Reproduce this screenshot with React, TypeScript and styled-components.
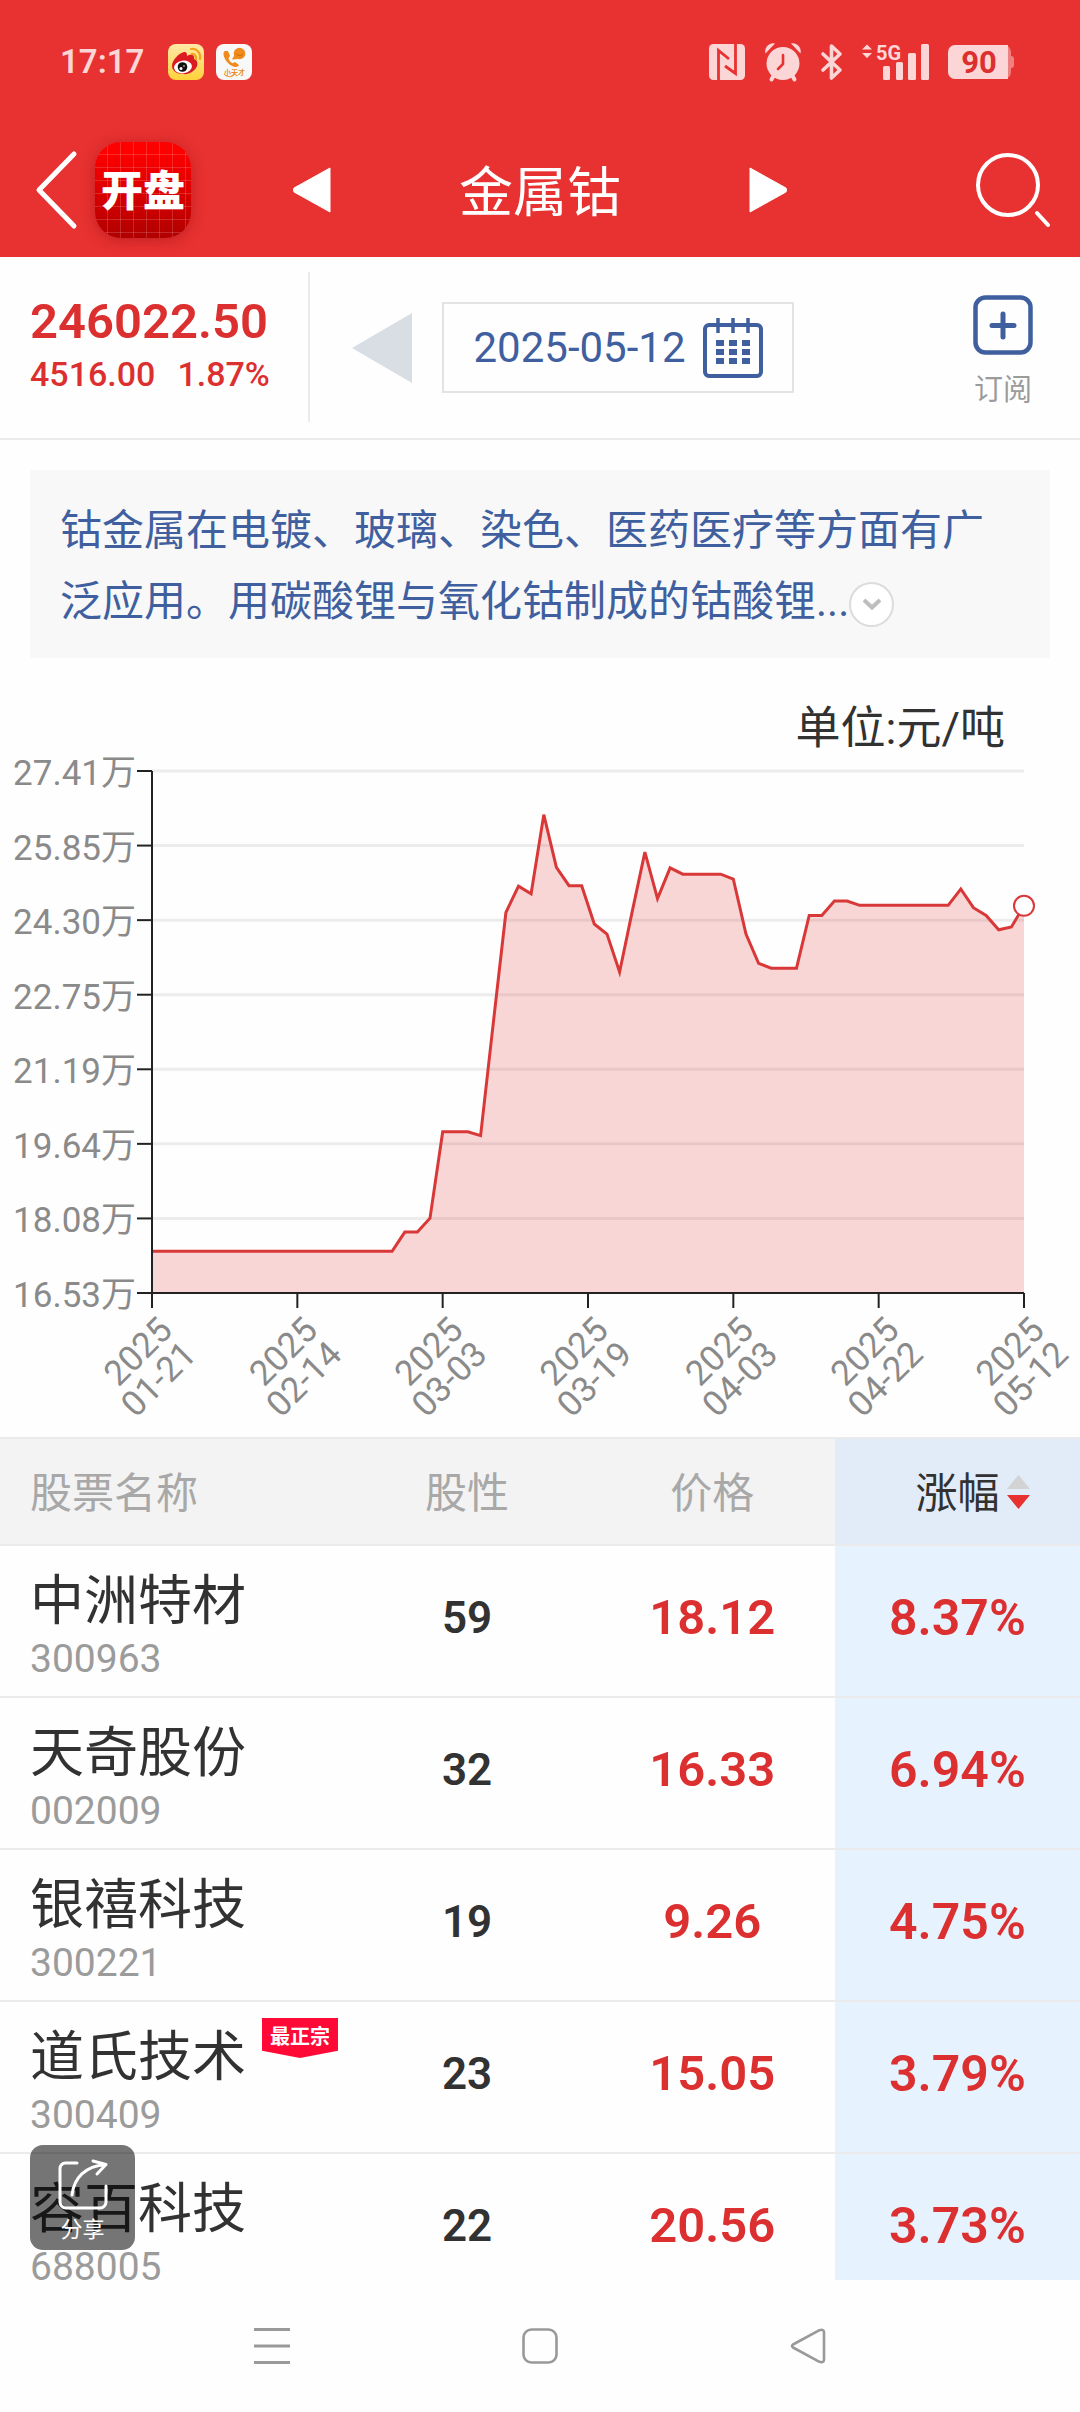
import React, { useState } from "react";
import styled, { createGlobalStyle } from "styled-components";

const color = {
  red: "#e83131",
  up: "#dc2f2f",
  blue: "#3f5f9f",
  ink: "#323232",
  muted: "#9b9b9b",
  head: "#a8a8a8",
  line: "#ebebeb",
  pale: "#fcd6d6",
};

const GlobalStyle = createGlobalStyle`
  * { box-sizing: border-box; }
  body {
    margin: 0;
    background: #fefefe;
    color: ${color.ink};
    font-family: Roboto, "Noto Sans CJK SC", sans-serif;
  }
  button {
    margin: 0;
    padding: 0;
    border: 0;
    background: none;
    color: inherit;
    font: inherit;
    cursor: pointer;
  }
  svg { display: block; overflow: visible; }
`;

const Screen = styled.div`
  display: flex;
  flex-direction: column;
  height: 100vh;
  overflow: hidden;
`;

/* ---------- top bars ---------- */

const TopArea = styled.header`
  flex: none;
  background: ${color.red};
  color: #fff;
`;

const StatusBar = styled.div`
  display: flex;
  align-items: center;
  justify-content: space-between;
  height: 122px;
  padding: 2px 66px 0 60px;
  color: ${color.pale};
`;

const StatusGroup = styled.div<{ $gap: number }>`
  display: flex;
  align-items: center;
  gap: ${(p) => p.$gap}px;
`;

const Clock = styled.time`
  margin-right: 12px;
  font-size: 33px;
  font-weight: 600;
  line-height: 40px;
`;

const TitleBar = styled.div`
  display: grid;
  grid-template-columns: 1fr auto 1fr;
  align-items: center;
  height: 135px;
  padding: 0 30px;
`;

const BrandSide = styled.div`
  display: flex;
  align-items: center;
  gap: 16px;
`;

const Brand = styled.a`
  display: flex;
  align-items: center;
  justify-content: center;
  width: 96px;
  height: 96px;
  padding-bottom: 4px;
  border-radius: 26px;
  background:
    repeating-linear-gradient(90deg, transparent 0 12px, rgba(255, 255, 255, 0.16) 12px 13px),
    repeating-linear-gradient(180deg, transparent 0 12px, rgba(255, 255, 255, 0.16) 12px 13px),
    linear-gradient(#ff0000 10%, #b00000);
  box-shadow: 0 2px 14px rgba(120, 0, 0, 0.35);
  color: #fff;
  font-family: "Noto Sans CJK SC", sans-serif;
  font-size: 42px;
  font-weight: 900;
  line-height: 60px;
  text-decoration: none;
`;

const TitleGroup = styled.div`
  display: flex;
  align-items: center;
  gap: 128px;
`;

const Title = styled.h1`
  margin: 0;
  font-size: 54px;
  font-weight: 400;
  line-height: 70px;
  padding-top: 8px;
`;

const SearchButton = styled.button`
  justify-self: end;
`;

/* ---------- quote ---------- */

const QuoteBar = styled.section`
  flex: none;
  display: flex;
  align-items: stretch;
  height: 183px;
  border-bottom: 2px solid ${color.line};
`;

const Quote = styled.div`
  width: 310px;
  margin: 15px 0 16px;
  padding: 22px 0 0 30px;
  border-right: 2px solid ${color.line};
  color: ${color.up};
`;

const LastPrice = styled.div`
  font-size: 49px;
  font-weight: 600;
  line-height: 56px;
`;

const Change = styled.div`
  display: flex;
  gap: 22px;
  font-size: 34px;
  font-weight: 500;
  line-height: 48px;
`;

const DateArea = styled.div`
  flex: 1;
  display: grid;
  grid-template-columns: 60px auto 60px;
  align-items: center;
  justify-content: center;
  gap: 30px;
`;

const DateButton = styled.button`
  display: flex;
  align-items: center;
  gap: 17px;
  height: 91px;
  padding: 0 29px;
  border: 2px solid #e3e3e3;
  color: ${color.blue};
  font-size: 42px;
  line-height: 50px;
`;

const Subscribe = styled.button`
  display: flex;
  flex-direction: column;
  align-items: center;
  gap: 12px;
  width: 154px;
  padding-top: 38px;
  color: ${color.muted};
  font-size: 29px;
  line-height: 46px;
`;

/* ---------- summary ---------- */

const Summary = styled.p`
  flex: none;
  margin: 30px 30px 0;
  padding: 25px 30px 21px;
  background: #f8f8f8;
  color: ${color.blue};
  font-size: 42px;
  line-height: 71px;
`;

const ExpandButton = styled.button`
  display: inline-flex;
  align-items: center;
  justify-content: center;
  width: 45px;
  height: 45px;
  border: 2px solid #dcdcdc;
  border-radius: 50%;
  background: #fff;
  vertical-align: middle;
`;

/* ---------- chart ---------- */

const ChartFigure = styled.figure`
  flex: none;
  margin: 0;
  padding-top: 43px;
`;

const ChartUnit = styled.figcaption`
  padding-right: 75px;
  font-size: 45px;
  line-height: 56px;
  text-align: right;
`;

const ChartSvg = styled.svg`
  width: 100%;
  height: auto;
  overflow: visible;

  text {
    fill: #8a8a8a;
    font-size: 35px;
    text-anchor: end;
  }
`;

/* ---------- stock list ---------- */

const ListArea = styled.section`
  position: relative;
  flex: 1;
  min-height: 0;
  overflow: hidden;
`;

const StockTable = styled.table`
  width: 100%;
  border-spacing: 0;
  table-layout: fixed;
`;

const HeadCell = styled.th<{ $active?: boolean; $first?: boolean }>`
  width: ${(p) => (p.$first ? "auto" : "22.7%")};
  height: 109px;
  padding: ${(p) => (p.$first ? "5px 0 0 30px" : "5px 0 0")};
  border-top: 2px solid ${color.line};
  border-bottom: 2px solid ${color.line};
  background: ${(p) => (p.$active ? "#e1ecf8" : "#f3f3f3")};
  color: ${(p) => (p.$active ? color.ink : color.head)};
  font-size: 42px;
  font-weight: 400;
  line-height: 60px;
  text-align: ${(p) => (p.$first ? "left" : "center")};
`;

const SortButton = styled.button`
  display: grid;
  grid-template-columns: 1fr auto 1fr;
  align-items: center;
  column-gap: 8px;
  width: 100%;

  span { grid-column: 2; }
  svg { margin-bottom: 4px; }
`;

const Cell = styled.td<{ $active?: boolean }>`
  height: 152px;
  padding: 0 0 6px;
  border-bottom: 2px solid ${color.line};
  background: ${(p) => (p.$active ? "#e6f2fe" : "transparent")};
  color: ${color.up};
  font-size: ${(p) => (p.$active ? 50 : 49)}px;
  font-weight: 600;
  line-height: 60px;
  text-align: center;
`;

const ScoreCell = styled(Cell)`
  color: ${color.ink};
  font-size: 44px;
`;

const NameCell = styled.th`
  height: 152px;
  padding: 16px 0 0 30px;
  border-bottom: 2px solid ${color.line};
  font-weight: 400;
  text-align: left;
  vertical-align: top;
`;

const NameLine = styled.div`
  display: flex;
  align-items: flex-start;
  gap: 16px;
  font-size: 54px;
  line-height: 80px;
  height: 70px;
  white-space: nowrap;
`;

const Code = styled.div`
  color: ${color.muted};
  font-size: 39px;
  line-height: 54px;
`;

const Tag = styled.span`
  height: 40px;
  padding: 0 8px;
  background: #ff0a37;
  clip-path: polygon(0 0, 100% 0, 100% 82%, 50% 100%, 0 82%);
  color: #fff;
  font-size: 20px;
  font-weight: 700;
  line-height: 38px;
`;

const ShareButton = styled.button`
  position: absolute;
  left: 30px;
  bottom: 30px;
  display: flex;
  flex-direction: column;
  align-items: center;
  width: 105px;
  height: 105px;
  padding-top: 14px;
  border-radius: 13px;
  background: rgba(0, 0, 0, 0.54);
  color: #fff;
  font-size: 22px;
  line-height: 40px;
`;

/* ---------- system navigation ---------- */

const SystemNav = styled.nav`
  flex: none;
  display: flex;
  height: 132px;
  padding: 0 12.8%;
`;

const NavButton = styled.button`
  flex: 1;
  display: flex;
  align-items: center;
  justify-content: center;
`;

/* ---------- icons ---------- */

const WeiboIcon = () => (
  <svg width="36" height="36" viewBox="0 0 36 36" aria-hidden="true">
    <defs>
      <linearGradient id="weibo" x1="0" y1="0" x2="0" y2="1">
        <stop offset="0" stopColor="#ffe9a8" />
        <stop offset="1" stopColor="#ffd23a" />
      </linearGradient>
    </defs>
    <rect width="36" height="36" rx="8" fill="url(#weibo)" />
    <path d="M4 22c0-6 7-13 12-14 3 0 3 2 3 4 3-2 8-2 7 3 3 1 4 4 3 7-2 5-8 9-14 8-6 0-11-3-11-8z" fill="#dd1a22" />
    <ellipse cx="15" cy="23" rx="9" ry="6.4" fill="#fff" transform="rotate(-8 15 23)" />
    <circle cx="14.5" cy="23" r="4.8" fill="#111" />
    <circle cx="13" cy="24.5" r="1.5" fill="#fff" />
    <circle cx="16" cy="22" r=".8" fill="#fff" />
    <path d="M23 5c6-1 10 4 9 10M23.500 10c3-.5 5 2 4.500 5" fill="none" stroke="#f5a21c" strokeWidth="2.200" strokeLinecap="round" />
  </svg>
);

const CallWatchIcon = () => (
  <svg width="36" height="36" viewBox="0 0 36 36" aria-hidden="true">
    <rect width="36" height="36" rx="8" fill="#f8f8f8" />
    <path d="M9 7c-2 1-2 4 0 8 2 4 6 7 10 8 2 .4 4-1 4-2l-4-3-2.500 1.200c-2-1-3.500-3-4-5L14 12l-2-5z" fill="#f08a1d" />
    <circle cx="23.500" cy="9.500" r="5.800" fill="#f08a1d" />
    <path d="M18.500 11l-2.500 4.500 6-.5z" fill="#f08a1d" />
    <path d="M20.500 10c2 2 4.500 2 6.500 0" fill="none" stroke="#c8690c" strokeWidth="1" />
    <text x="18.500" y="31" fontSize="7" fontWeight="700" fill="#e8902c" textAnchor="middle">小天才</text>
    <path d="M8 30c2 3 8 4 11 0" fill="none" stroke="#e8902c" strokeWidth="1" />
  </svg>
);

const NfcIcon = () => (
  <svg width="36" height="36" viewBox="0 0 36 36" aria-hidden="true">
    <rect width="36" height="36" rx="4.500" fill={color.pale} />
    <path d="M9.500 36V6.500L20 15M26.500 0v29.500L16 22" fill="none" stroke={color.red} strokeWidth="2.800" />
  </svg>
);

const AlarmIcon = () => (
  <svg width="38" height="40" viewBox="0 0 38 40" aria-hidden="true">
    <g stroke={color.pale} strokeWidth="4" strokeLinecap="round">
      <path d="M10 33l-2.500 4.500M28 33l2.500 4.500" />
    </g>
    <path d="M1.500 11.500C0 6 5 0 11 1.500zM36.500 11.500C38 6 33 0 27 1.500z" fill={color.pale} />
    <circle cx="19" cy="21.500" r="16.500" fill={color.pale} />
    <path d="M19 13v9l-5 5" fill="none" stroke={color.red} strokeWidth="2.600" strokeLinecap="round" />
  </svg>
);

const BluetoothIcon = () => (
  <svg width="22" height="38" viewBox="0 0 22 38" aria-hidden="true">
    <path d="M2 11l17 16-8.500 8V3L19 11 2 27" fill="none" stroke={color.pale} strokeWidth="3.600" strokeLinejoin="round" strokeLinecap="round" />
  </svg>
);

const SignalIcon = () => (
  <svg width="67" height="38" viewBox="0 0 67 38" role="img" aria-label="5G">
    <g fill={color.pale}>
      <path d="M0 6.500l5-5 5 5zM0 10l5 5 5-5z" />
      <text x="14" y="17" fontSize="20" fontWeight="700">5G</text>
      <rect x="21" y="23" width="7" height="14" rx="1.500" />
      <rect x="34" y="19" width="7" height="18" rx="1.500" />
      <rect x="46" y="10" width="8" height="27" rx="1.500" />
      <rect x="59" y="1" width="8" height="36" rx="1.500" />
    </g>
  </svg>
);

const BatteryIcon = ({ level }: { level: number }) => (
  <svg width="66" height="34" viewBox="0 0 66 34" role="img" aria-label="电量">
    <rect x="1" width="62" height="34" rx="7" fill="#f08080" />
    <rect x="58" y="11" width="8" height="12" rx="3" fill="#f08080" />
    <path d="M7 0h53v34H7a7 7 0 0 1-7-7V7a7 7 0 0 1 7-7z" fill={color.pale} />
    <text x="31" y="28" fontSize="31" fontWeight="700" fill={color.up} textAnchor="middle">{level}</text>
  </svg>
);

const BackIcon = () => (
  <svg width="49" height="80" viewBox="0 0 49 80" aria-hidden="true">
    <path d="M44 4L9 40l35 36" fill="none" stroke="#fff" strokeWidth="5" strokeLinecap="round" strokeLinejoin="round" />
  </svg>
);

const SearchIcon = () => (
  <svg width="75" height="76" viewBox="0 0 75 76" aria-hidden="true">
    <circle cx="33" cy="33" r="30" fill="none" stroke="#fff" strokeWidth="4" />
    <path d="M62 61l11 12" stroke="#fff" strokeWidth="4" strokeLinecap="round" />
  </svg>
);

const SolidTriangle = ({ flip }: { flip?: boolean }) => (
  <svg width="38" height="46" viewBox="0 0 38 46" aria-hidden="true">
    <path d={flip ? "M1 1v44L37 25q1-2 0-4z" : "M37 1v44L1 25q-1-2 0-4z"} fill="#fff" stroke="#fff" strokeLinejoin="round" />
  </svg>
);

const DayTriangle = () => (
  <svg width="60" height="70" viewBox="0 0 60 70" aria-hidden="true">
    <path d="M60 0v70L0 35z" fill="#d9dee5" />
  </svg>
);

const CalendarIcon = () => (
  <svg width="60" height="60" viewBox="0 0 60 60" aria-hidden="true">
    <g fill="none" stroke={color.blue}>
      <rect x="2" y="7" width="56" height="51" rx="4" strokeWidth="4" />
      <path d="M15 0v15M30 0v15M45 0v15" strokeWidth="3.500" />
    </g>
    <g fill={color.blue}>
      {[22, 31, 40].map((y) => [13, 26, 39].map((x) => <rect key={`${x}-${y}`} x={x} y={y} width="8" height="6" />))}
    </g>
  </svg>
);

const PlusIcon = () => (
  <svg width="60" height="60" viewBox="0 0 60 60" aria-hidden="true">
    <g fill="none" stroke={color.blue}>
      <rect x="2.500" y="2.500" width="55" height="55" rx="10" strokeWidth="4.500" />
      <path d="M30 19v23M19 30.500h22" strokeWidth="5" strokeLinecap="round" />
    </g>
  </svg>
);

const ChevronIcon = () => (
  <svg width="20" height="13" viewBox="0 0 20 13" aria-hidden="true">
    <path d="M2 2l8 7.500L18 2" fill="none" stroke="#bdbdbd" strokeWidth="4" />
  </svg>
);

const SortIcon = () => (
  <svg width="23" height="35" viewBox="0 0 23 35" aria-hidden="true">
    <path d="M0 14L11.500 0 23 14z" fill="#d3d3d3" />
    <path d="M0 20l11.500 14L23 20z" fill={color.red} />
  </svg>
);

const ShareIcon = () => (
  <svg width="50" height="51" viewBox="0 0 50 51" aria-hidden="true">
    <g fill="none" stroke="#fff" strokeWidth="3" strokeLinecap="round" strokeLinejoin="round">
      <path d="M19 4H7.500A5.500 5.500 0 0 0 2 9.500V43a6 6 0 0 0 6 6h34a6 6 0 0 0 6-6V27" />
      <path d="M14 36C16 19 27 7 48 5.500M35 2l13 3.500L39 15" />
    </g>
  </svg>
);

/* ---------- chart data ---------- */

// Cobalt price in units of 10,000 yuan per tonne, one entry per trading day.
const PRICES = [
  ...Array(20).fill(17.4),
  17.8, 17.8, 18.09, 19.89, 19.89, 19.89, 19.81, 22.14, 24.46, 25.01, 24.85, 26.5,
  25.4, 25.02, 25.02, 24.22, 24.01, 23.22, 24.48, 25.72, 24.75, 25.39, 25.26, 25.26,
  25.26, 25.26, 25.16, 24.01, 23.4, 23.3, 23.3, 23.3, 24.4, 24.4, 24.7, 24.7,
  24.61, 24.61, 24.61, 24.61, 24.61, 24.61, 24.61, 24.61, 24.95, 24.56, 24.4, 24.1,
  24.16, 24.6,
];
const LEVELS = ["27.41", "25.85", "24.30", "22.75", "21.19", "19.64", "18.08", "16.53"];
const DATES = ["01-21", "02-14", "03-03", "03-19", "04-03", "04-22", "05-12"];

const PLOT = { left: 152, right: 1024, top: 14, bottom: 536 };
const MIN = 16.53;
const MAX = 27.41;

const PriceChart = () => {
  const w = PLOT.right - PLOT.left;
  const h = PLOT.bottom - PLOT.top;
  const px = (i: number) => PLOT.left + (w * i) / (PRICES.length - 1);
  const py = (v: number) => PLOT.bottom - (h * (v - MIN)) / (MAX - MIN);
  const line = PRICES.map((v, i) => `${px(i).toFixed(1)},${py(v).toFixed(1)}`).join(" ");
  const last = PRICES.length - 1;

  return (
    <ChartSvg viewBox="0 0 1080 680" role="img" aria-label="金属钴价格走势">
      {LEVELS.map((label, i) => {
        const y = PLOT.top + (h * i) / (LEVELS.length - 1);
        return (
          <g key={label}>
            {i < LEVELS.length - 1 && <path d={`M${PLOT.left} ${y}H${PLOT.right}`} stroke="#ececec" strokeWidth="3" />}
            <path d={`M${PLOT.left - 15} ${y}h15`} stroke="#222" strokeWidth="2" />
            <text x={PLOT.left - 16} y={y + 14}>{label}万</text>
          </g>
        );
      })}
      <polygon
        points={`${PLOT.left},${PLOT.bottom} ${line} ${PLOT.right},${PLOT.bottom}`}
        fill="#e83636"
        fillOpacity="0.2"
      />
      <polyline points={line} fill="none" stroke="#d93838" strokeWidth="3" />
      <path d={`M${PLOT.left} ${PLOT.top}V${PLOT.bottom}H${PLOT.right}`} fill="none" stroke="#222" strokeWidth="2" />
      {DATES.map((label, i) => {
        const x = PLOT.left + (w * i) / (DATES.length - 1);
        return (
          <g key={label}>
            <path d={`M${x} ${PLOT.bottom}v15`} stroke="#222" strokeWidth="2" />
            <g transform={`translate(${x + 13} ${PLOT.bottom + 30}) rotate(-45)`}>
              <text y="13">2025</text>
              <text y="47">{label}</text>
            </g>
          </g>
        );
      })}
      <circle cx={px(last)} cy={py(PRICES[last])} r="10" fill="#fff" stroke="#d93838" strokeWidth="2" />
    </ChartSvg>
  );
};

/* ---------- list data ---------- */

const STOCKS = [
  { name: "中洲特材", code: "300963", score: 59, price: "18.12", change: "8.37%" },
  { name: "天奇股份", code: "002009", score: 32, price: "16.33", change: "6.94%" },
  { name: "银禧科技", code: "300221", score: 19, price: "9.26", change: "4.75%" },
  { name: "道氏技术", code: "300409", score: 23, price: "15.05", change: "3.79%", tag: "最正宗" },
  { name: "容百科技", code: "688005", score: 22, price: "20.56", change: "3.73%" },
];

export default function App() {
  const [descending, setDescending] = useState(true);
  const rows = descending ? STOCKS : [...STOCKS].reverse();

  return (
    <Screen>
      <GlobalStyle />
      <TopArea>
        <StatusBar>
          <StatusGroup $gap={12}>
            <Clock>17:17</Clock>
            <WeiboIcon />
            <CallWatchIcon />
          </StatusGroup>
          <StatusGroup $gap={19}>
            <NfcIcon />
            <AlarmIcon />
            <BluetoothIcon />
            <SignalIcon />
            <BatteryIcon level={90} />
          </StatusGroup>
        </StatusBar>
        <TitleBar>
          <BrandSide>
            <button aria-label="返回"><BackIcon /></button>
            <Brand href="#">开盘</Brand>
          </BrandSide>
          <TitleGroup>
            <button aria-label="上一个"><SolidTriangle /></button>
            <Title>金属钴</Title>
            <button aria-label="下一个"><SolidTriangle flip /></button>
          </TitleGroup>
          <SearchButton aria-label="搜索"><SearchIcon /></SearchButton>
        </TitleBar>
      </TopArea>

      <QuoteBar>
        <Quote>
          <LastPrice>246022.50</LastPrice>
          <Change>
            <span>4516.00</span>
            <span>1.87%</span>
          </Change>
        </Quote>
        <DateArea>
          <button aria-label="前一天"><DayTriangle /></button>
          <DateButton>
            2025-05-12
            <CalendarIcon />
          </DateButton>
        </DateArea>
        <Subscribe>
          <PlusIcon />
          订阅
        </Subscribe>
      </QuoteBar>

      <Summary>
        钴金属在电镀、玻璃、染色、医药医疗等方面有广泛应用。用碳酸锂与氧化钴制成的钴酸锂...
        <ExpandButton aria-label="展开"><ChevronIcon /></ExpandButton>
      </Summary>

      <ChartFigure>
        <ChartUnit>单位:元/吨</ChartUnit>
        <PriceChart />
      </ChartFigure>

      <ListArea>
        <StockTable>
          <thead>
            <tr>
              <HeadCell scope="col" $first>股票名称</HeadCell>
              <HeadCell scope="col">股性</HeadCell>
              <HeadCell scope="col">价格</HeadCell>
              <HeadCell scope="col" $active>
                <SortButton onClick={() => setDescending(!descending)}>
                  <span>涨幅</span>
                  <SortIcon />
                </SortButton>
              </HeadCell>
            </tr>
          </thead>
          <tbody>
            {rows.map((s) => (
              <tr key={s.code}>
                <NameCell scope="row">
                  <NameLine>
                    {s.name}
                    {s.tag && <Tag>{s.tag}</Tag>}
                  </NameLine>
                  <Code>{s.code}</Code>
                </NameCell>
                <ScoreCell>{s.score}</ScoreCell>
                <Cell>{s.price}</Cell>
                <Cell $active>{s.change}</Cell>
              </tr>
            ))}
          </tbody>
        </StockTable>
        <ShareButton>
          <ShareIcon />
          分享
        </ShareButton>
      </ListArea>

      <SystemNav aria-label="系统导航">
        <NavButton aria-label="最近任务">
          <svg width="36" height="36" viewBox="0 0 36 36" aria-hidden="true">
            <path d="M0 1.500h36M0 18h36M0 34.500h36" stroke="#999" strokeWidth="3" />
          </svg>
        </NavButton>
        <NavButton aria-label="主屏幕">
          <svg width="36" height="36" viewBox="0 0 36 36" aria-hidden="true">
            <rect x="1.500" y="1.500" width="33" height="33" rx="8" fill="none" stroke="#999" strokeWidth="2.600" />
          </svg>
        </NavButton>
        <NavButton aria-label="返回">
          <svg width="36" height="36" viewBox="0 0 36 36" aria-hidden="true">
            <path d="M3 16.500L29.500 2.200Q34 .8 34 4.500v27q0 3.700-4.500 2.300L3 19.500q-2-1.500 0-3z" fill="none" stroke="#999" strokeWidth="2.600" strokeLinejoin="round" />
          </svg>
        </NavButton>
      </SystemNav>
    </Screen>
  );
}
